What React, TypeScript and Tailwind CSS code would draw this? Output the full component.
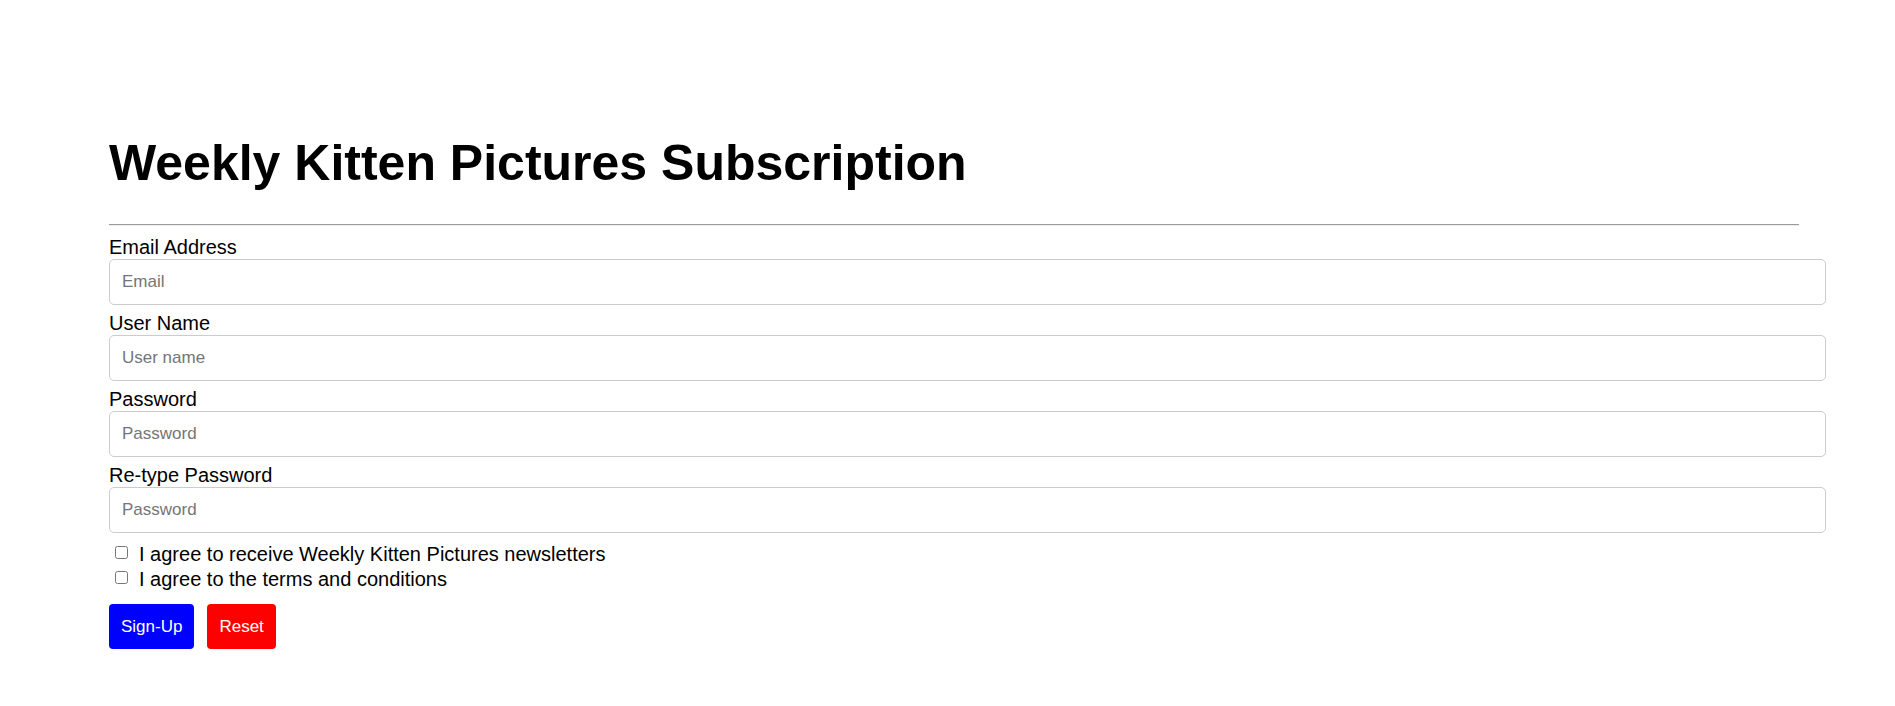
import React from "react";

const fields = [
  { label: "Email Address", placeholder: "Email", type: "email" },
  { label: "User Name", placeholder: "User name", type: "text" },
  { label: "Password", placeholder: "Password", type: "password" },
  { label: "Re-type Password", placeholder: "Password", type: "password" },
];

export default function App() {
  return (
    <div
      className="min-h-[706px] w-full bg-white text-black"
      style={{ fontFamily: '"Liberation Sans", Arial, sans-serif' }}
    >
      <div className="pl-[109px] pt-[134px]">
        <h1 className="text-[50px] font-bold leading-[58px]">
          Weekly Kitten Pictures Subscription
        </h1>
        <div className="mt-[32px] h-[2px] w-[1690px] border-t border-b border-t-[#9a9a9a] border-b-[#eeeeee]" />
        <form className="mt-[8px] flex flex-col" onSubmit={(e) => e.preventDefault()}>
          {fields.map((f) => (
            <div key={f.label} className="flex flex-col">
              <label className="pt-[2px] text-[20px] leading-[23px]">{f.label}</label>
              <input
                type={f.type}
                placeholder={f.placeholder}
                className="mb-[5px] h-[46px] w-[1717px] rounded-[5px] border border-[#cccccc] bg-white pl-[12px] text-[17px] outline-none placeholder:text-[#757575]"
              />
            </div>
          ))}
          <div className="mt-[4px] flex flex-col">
            <label className="flex h-[25px] items-start text-[20px] leading-[25px]">
              <input type="checkbox" className="mt-[4px] ml-[6px] mr-[11px] h-[13px] w-[13px]" />
              <span>I agree to receive Weekly Kitten Pictures newsletters</span>
            </label>
            <label className="flex h-[25px] items-start text-[20px] leading-[25px]">
              <input type="checkbox" className="mt-[4px] ml-[6px] mr-[11px] h-[13px] w-[13px]" />
              <span>I agree to the terms and conditions</span>
            </label>
          </div>
          <div className="mt-[12px] flex gap-[13px]">
            <button
              type="submit"
              className="h-[45px] rounded-[4px] bg-[#0000ff] px-[12px] text-[17px] text-white"
            >
              Sign-Up
            </button>
            <button
              type="reset"
              className="h-[45px] rounded-[4px] bg-[#ff0000] px-[12px] text-[17px] text-white"
            >
              Reset
            </button>
          </div>
        </form>
      </div>
    </div>
  );
}
